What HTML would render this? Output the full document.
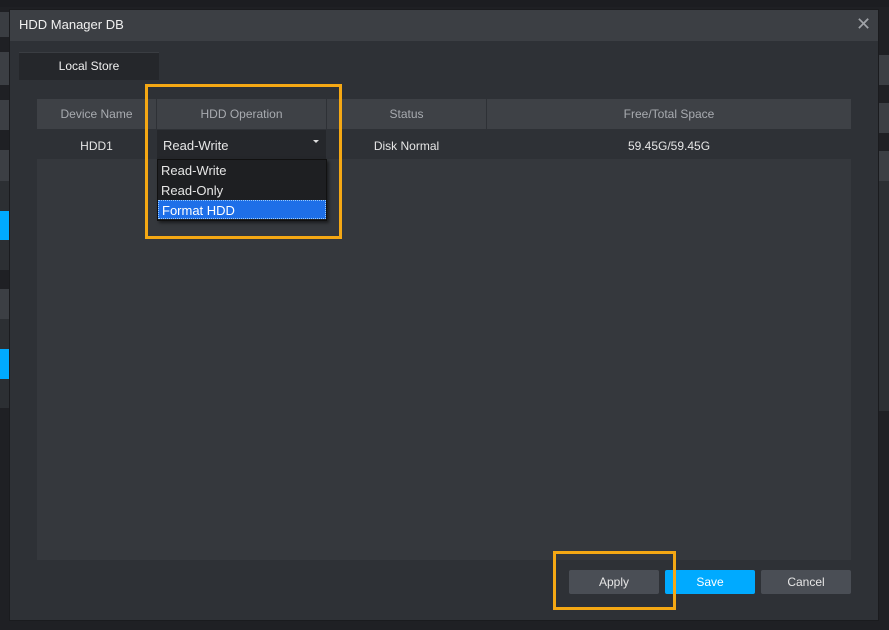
<!DOCTYPE html>
<html><head><style>
*{margin:0;padding:0;box-sizing:border-box}
body{width:889px;height:630px;background:#1f2024;position:relative;overflow:hidden;font-family:"Liberation Sans",sans-serif;font-size:12px;color:#e6e6e6}
.a{position:absolute}
</style></head><body>
<div class="a" style="left:0;top:0;width:889px;height:7px;background:#1c1d21"></div>
<!-- left strip -->
<div class="a" style="left:0;top:12px;width:9px;height:25px;background:#3a3d42"></div>
<div class="a" style="left:0;top:52px;width:9px;height:33px;background:#3c3f44"></div>
<div class="a" style="left:0;top:100px;width:9px;height:30px;background:#3c3f44"></div>
<div class="a" style="left:0;top:150px;width:9px;height:31px;background:#3c3f44"></div>
<div class="a" style="left:0;top:181px;width:9px;height:89px;background:#2c2f33"></div>
<div class="a" style="left:0;top:211px;width:9px;height:29px;background:#00aaff"></div>
<div class="a" style="left:0;top:289px;width:9px;height:30px;background:#3c3f44"></div>
<div class="a" style="left:0;top:319px;width:9px;height:89px;background:#2c2f33"></div>
<div class="a" style="left:0;top:349px;width:9px;height:30px;background:#00aaff"></div>
<!-- right strip -->
<div class="a" style="left:879px;top:55px;width:10px;height:30px;background:#3c3f44"></div>
<div class="a" style="left:879px;top:103px;width:10px;height:30px;background:#3c3f44"></div>
<div class="a" style="left:879px;top:151px;width:10px;height:30px;background:#3c3f44"></div>
<div class="a" style="left:879px;top:181px;width:10px;height:230px;background:#2c2f33"></div>
<!-- dialog -->
<div class="a" style="left:9px;top:9px;width:870px;height:612px;background:#2e3136;border:1px solid #1a1b1e"></div>
<div class="a" style="left:10px;top:10px;width:868px;height:31px;background:#3c3f44"></div>
<div class="a" style="left:19px;top:17px;font-size:13px;color:#f0f0f0">HDD Manager DB</div>
<div class="a" style="left:856px;top:14px;font-size:18px;color:#a0a3a8">✕</div>
<!-- tab -->
<div class="a" style="left:19px;top:52px;width:140px;height:28px;background:#25272b;border-top:1px solid #3a3d42"></div>
<div class="a" style="left:19px;top:59px;width:140px;text-align:center;color:#f0f0f0">Local Store</div>
<!-- table -->
<div class="a" style="left:37px;top:99px;width:814px;height:461px;background:#35383d"></div>
<div class="a" style="left:37px;top:99px;width:814px;height:30px;background:#3e4146"></div>
<div class="a" style="left:37px;top:129px;width:814px;height:30px;background:#2e3136"></div>
<div class="a" style="left:156px;top:99px;width:1px;height:30px;background:#2e3136"></div>
<div class="a" style="left:326px;top:99px;width:1px;height:30px;background:#2e3136"></div>
<div class="a" style="left:486px;top:99px;width:1px;height:30px;background:#2e3136"></div>
<div class="a" style="left:37px;top:107px;width:119px;text-align:center;color:#a8abb0">Device Name</div>
<div class="a" style="left:157px;top:107px;width:169px;text-align:center;color:#a8abb0">HDD Operation</div>
<div class="a" style="left:327px;top:107px;width:159px;text-align:center;color:#a8abb0">Status</div>
<div class="a" style="left:487px;top:107px;width:364px;text-align:center;color:#a8abb0">Free/Total Space</div>
<div class="a" style="left:37px;top:139px;width:119px;text-align:center">HDD1</div>
<div class="a" style="left:157px;top:130px;width:169px;height:29px;background:#25272b"></div>
<div class="a" style="left:163px;top:138px;font-size:13px">Read-Write</div>
<div class="a" style="left:313px;top:140px;width:0;height:0;border-left:3px solid transparent;border-right:3px solid transparent;border-top:3px solid #ddd"></div>
<div class="a" style="left:327px;top:139px;width:159px;text-align:center">Disk Normal</div>
<div class="a" style="left:487px;top:139px;width:364px;text-align:center">59.45G/59.45G</div>
<!-- dropdown -->
<div class="a" style="left:157px;top:159px;width:170px;height:62px;background:#1e1f22;border:1px solid #111;box-shadow:2px 2px 3px rgba(0,0,0,.5)"></div>
<div class="a" style="left:161px;top:163px;font-size:13px">Read-Write</div>
<div class="a" style="left:161px;top:183px;font-size:13px">Read-Only</div>
<div class="a" style="left:158px;top:200px;width:168px;height:19px;background:#1e6fe8;border:1px dotted #9cf"></div>
<div class="a" style="left:162px;top:203px;font-size:13px;color:#fff">Format HDD</div>
<div class="a" style="left:145px;top:84px;width:197px;height:155px;border:3px solid #f5a814"></div>
<!-- buttons -->
<div class="a" style="left:569px;top:570px;width:90px;height:24px;background:#4a4e55;border-radius:2px;text-align:center;line-height:24px">Apply</div>
<div class="a" style="left:665px;top:570px;width:90px;height:24px;background:#00aaff;border-radius:2px;text-align:center;line-height:24px;color:#fff">Save</div>
<div class="a" style="left:761px;top:570px;width:90px;height:24px;background:#4a4e55;border-radius:2px;text-align:center;line-height:24px">Cancel</div>
<div class="a" style="left:553px;top:551px;width:123px;height:59px;border:3px solid #f5a814"></div>
</body></html>
